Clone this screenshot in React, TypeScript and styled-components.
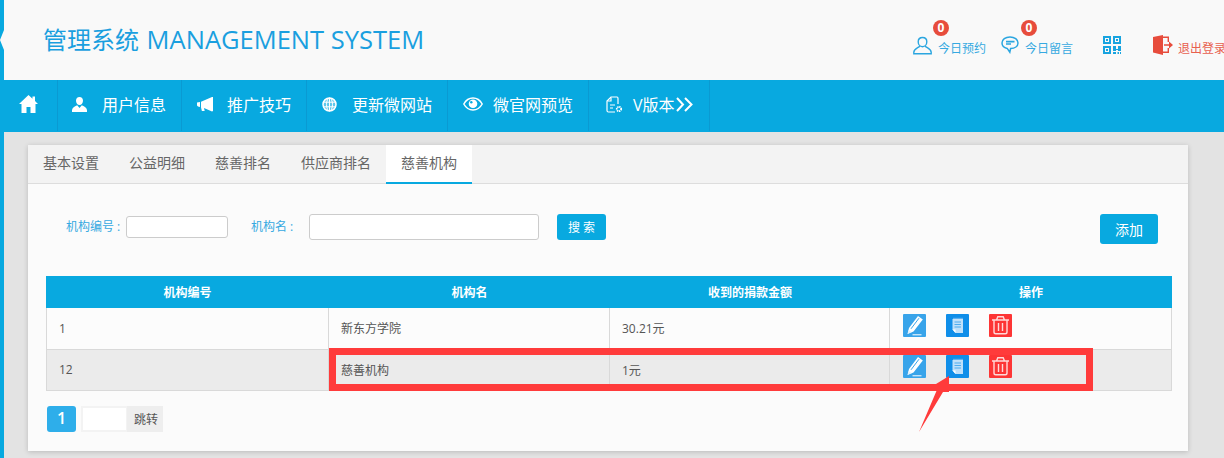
import React from "react";
import styled, { createGlobalStyle } from "styled-components";

const Global = createGlobalStyle`
  html, body { margin: 0; padding: 0; height: 458px; overflow: hidden; background: #e3e3e3; }
  body, input, button { font-family: "Open Sans", "Noto Sans CJK SC", sans-serif; }
  * { box-sizing: border-box; }
`;

const Shell = styled.div`
  position: relative; width: 1224px; height: 458px; overflow: hidden;
  display: flex; background: #e3e3e3;
`;
const Strip = styled.div`
  position: relative; width: 4px; flex: none; background: #08a9e0;
  &::after {
    content: ""; position: absolute; left: 0; top: 30px; width: 0; height: 0;
    border-right: 4px solid #f9f9f9; border-top: 10px solid transparent; border-bottom: 10px solid transparent;
  }
`;
const Main = styled.div`flex: 1; min-width: 0; display: flex; flex-direction: column;`;
const Header = styled.header`
  height: 80px; background: #f9f9f9; display: flex; position: relative; flex: none;
`;
const Title = styled.h1`
  margin: 23px 0 0 39px; height: 32px; font-size: 25.5px; line-height: 32px; font-weight: 400; color: #1a9fdf; white-space: nowrap;
  span { font-size: 24px; margin-right: 1px; }
`;
const Tools = styled.div`
  margin-left: auto; display: flex; align-items: flex-start; padding-top: 35px; width: 311px; flex: none; white-space: nowrap;
`;
const Tool = styled.div<{ $w: number; $gap?: number }>`
  position: relative; width: ${p => p.$w}px; flex: none; height: 20px; display: flex; align-items: center; gap: ${p => p.$gap ?? 6}px;
  font-size: 12px; color: ${p => p.color || "#36a9e1"};
  svg { flex: none; }
  span.label { margin-top: 6px; }
`;
const Badge = styled.span`
  position: absolute; left: 20px; top: -15px; width: 16px; height: 16px; border-radius: 50%;
  background: #e74c3c; color: #fff; font-size: 12px; font-weight: 700; line-height: 15px; text-align: center;
`;
const Nav = styled.nav`
  height: 52px; background: #08a9e0; display: flex; flex: none;
`;
const NavItem = styled.div<{ $w: number; $gap?: number; $pl?: number }>`
  width: ${p => p.$w}px; height: 51px; flex: none; display: flex; align-items: center; gap: ${p => p.$gap ?? 15}px; padding: 0 0 3px ${p => p.$pl ?? 15}px;
  border-right: 1px solid #0a9ad2; color: #fff; font-size: 16px; white-space: nowrap;
  svg { flex: none; }
`;
const VLabel = styled.span`
  display: inline-flex; align-items: center; svg { margin-left: 1px; }
`;
const Card = styled.section`
  margin: 13px 0 0 24px; width: 1160px; height: 306px; background: #fbfbfb; box-shadow: 0 1px 5px rgba(0,0,0,.18); flex: none;
`;
const Tabs = styled.div`
  height: 39px; background: #f3f3f3; border-bottom: 1px solid #ddd; display: flex;
`;
const Tab = styled.div<{ $active?: boolean }>`
  height: 39px; padding: 0 15px; font-size: 14px; line-height: 36px; color: #666; white-space: nowrap;
  background: ${p => (p.$active ? "#fff" : "transparent")};
  border-bottom: 2px solid ${p => (p.$active ? "#08a9e0" : "transparent")};
`;
const SearchBar = styled.div`
  height: 92px; padding: 30px 30px 0 38px; display: flex; align-items: flex-start; position: relative;
`;
const Label = styled.label<{ $w: number; $ml?: number }>`
  width: ${p => p.$w}px; margin-left: ${p => p.$ml || 0}px; height: 26px; line-height: 26px; font-size: 12px; color: #36a9e1; white-space: pre; flex: none;
`;
const Field = styled.input<{ $w: number; $h: number; $mt?: number }>`
  width: ${p => p.$w}px; height: ${p => p.$h}px; margin-top: ${p => p.$mt || 0}px; padding: 0;
  border: 1px solid #ccc; border-radius: 3px; background: #fff; flex: none; outline: none;
`;
const Btn = styled.button<{ $w: number; $h: number; $fs: number; $ml: number }>`
  width: ${p => p.$w}px; height: ${p => p.$h}px; margin-left: ${p => p.$ml}px; border: 0; border-radius: 3px; background: #08a9e0; color: #fff; padding: 0;
  font-size: ${p => p.$fs}px; flex: none;
`;
const Table = styled.table`
  width: 1126px; margin-left: 18px; border-collapse: separate; border-spacing: 0; table-layout: fixed; font-size: 12px;
`;
const Th = styled.th<{ $w: number }>`
  width: ${p => p.$w}px; height: 32px; padding: 0; background: #08a9e0; color: #fff; font-weight: 700; font-size: 12px; text-align: center;
`;
const Tr = styled.tr<{ $alt?: boolean }>`
  background: ${p => (p.$alt ? "#ebebeb" : "#fcfcfc")};
`;
const Td = styled.td<{ $pl?: number; $first?: boolean; $h: number }>`
  border-right: 1px solid #d9d9d9; border-bottom: 1px solid #d9d9d9;
  border-left: ${p => (p.$first ? "1px solid #d9d9d9" : "0")};
  height: ${p => p.$h}px; padding: 0 12px 1px ${p => p.$pl ?? 12}px; color: #555; white-space: nowrap;
`;
const Actions = styled.div`
  display: flex; gap: 20px; margin-top: -6px;
`;
const Pager = styled.div`
  display: flex; margin: 15px 0 0 19px; height: 26px;
`;
const PageNo = styled.div`
  width: 29px; height: 26px; border-radius: 3px; background: #2eaeea; color: #fff; text-align: center; line-height: 25px; font-size: 16px; font-weight: 600;
`;
const Jump = styled.div`
  margin-left: 5px; width: 82px; height: 26px; background: #eee; display: flex; align-items: center; font-size: 12px; color: #555;
`;
const JumpInput = styled.div`
  width: 46px; height: 26px; margin-right: 7px; background: #fff; border: 2px solid #f3f3f3; border-right-width: 1px;
`;
const Mark = styled.svg`
  position: absolute; left: 0; top: 0; pointer-events: none;
`;

const B = "#2ba6e0";
const User = () => (
  <svg width="19" height="19" viewBox="0 0 19 19" fill="none" stroke={B} strokeWidth="1.4">
    <path d="M9.500 1.500c2.500 0 4.300 1.700 4.300 4.200 0 2.600-1.800 5-4.300 5s-4.300-2.400-4.300-5c0-2.500 1.800-4.200 4.300-4.200z" />
    <path d="M6.800 9.800c-.3 1.900-5.800 2.300-6 6.500v1.500h17.400v-1.500c-.2-4.200-5.700-4.600-6-6.500" />
  </svg>
);
const Chat = () => (
  <svg width="18" height="18" viewBox="0 0 18 18" fill="none" stroke={B} strokeWidth="1.500">
    <path d="M9 1C4.400 1 1 3.500 1 7c0 2.900 2.200 4.800 5.200 5.400l2.600 3.800.8-3.700C13.800 12.400 17 10.300 17 7c0-3.500-3.500-6-8-6z" />
    <path d="M5 5.600h8.500M5 8h5" strokeWidth="1.700" />
  </svg>
);
const Qr = () => (
  <svg width="18" height="19" viewBox="0 0 18 19" fill="#18a4e0">
    <path fillRule="evenodd" d="M0 0h8v8H0zM2 2v4h4V2zM10 0h8v8h-8zM12 2v4h4V2zM0 10h8v8H0zM2 12v4h4v-4z" />
    <path d="M3 3h2v2H3zM13 3h2v2h-2zM3 13h2v2H3zM10 10h3v3h2v-3h3v5h-3v-1h-2v1h-3zM10 16h3v2h-3zM14.500 16h1.500v2h-1.500zM17 16h1v2h-1z" />
  </svg>
);
const Exit = () => (
  <svg width="20" height="20" viewBox="0 0 20 20" fill="#e74c3c">
    <path d="M0 2 10 0v20L0 17.500z" />
    <path d="M10 1.500h6V7h-1.400V3H10zM10 16.500h4.600V13H16v5h-6z" />
    <path d="M11 9.200h5V6.500l4 3.500-4 3.500v-2.700h-5z" />
  </svg>
);
const Home = () => (
  <svg width="19" height="18" viewBox="0 0 19 18" fill="#fff">
    <path d="M9.500 0 0 9h2.500v9h5v-6h4v6h5V9H19l-3-2.900V1.500h-2.500v2.200z" />
  </svg>
);
const NavUser = () => (
  <svg width="15" height="15" viewBox="0 0 15 15" fill="#fff">
    <path d="M7.500 0C9.700 0 11 1.600 11 3.700c0 2-1.400 4.300-3.500 4.300S4 5.700 4 3.700C4 1.600 5.300 0 7.500 0zM5.200 8.300 7.500 11l2.300-2.700c2 .8 4.800 2.300 5.200 4.700v2H0v-2c.4-2.400 3.200-3.900 5.200-4.700z" />
  </svg>
);
const Horn = () => (
  <svg width="16" height="15" viewBox="0 0 16 15" fill="#fff">
    <path d="M0 5.500 3 5v5L1 9.500 0 8.500zM4 4.800 15 0h1v14l-1 .5L7 11l.7 3H4.900L4 10.500z" />
  </svg>
);
const Globe = () => (
  <svg width="15" height="15" viewBox="0 0 15 15" fill="none" stroke="#fff">
    <circle cx="7.500" cy="7.500" r="6.500" fill="#fff" fillOpacity=".35" strokeWidth="1.500" />
    <ellipse cx="7.500" cy="7.500" rx="3" ry="6.500" />
    <path d="M7.500 1v13M1 5.200h13M1 9.800h13" />
  </svg>
);
const Eye = () => (
  <svg width="20" height="14" viewBox="0 0 20 14" fill="none">
    <path d="M.8 7C3 3 6.300 1 10 1s7 2 9.200 6c-2.200 4-5.500 6-9.200 6S3 11 .8 7z" stroke="#fff" strokeWidth="1.500" />
    <circle cx="10" cy="6.800" r="4.300" fill="#fff" />
    <circle cx="8.300" cy="5.200" r="1.200" fill="#08a9e0" />
  </svg>
);
const Doc = () => (
  <svg width="18" height="17" viewBox="0 0 18 17" fill="none" stroke="#fff" strokeWidth="1.200">
    <path d="M9 16H2.500Q1 16 1 14.500V5l4-4h6q1 0 1 1.500V8" />
    <path d="M1.500 5H5V1.500M4 9h5M4 12h3" />
    <circle cx="13" cy="13" r="2.200" strokeWidth="1.800" strokeDasharray="1.300 .6" />
  </svg>
);
const Chevrons = () => (
  <svg width="17" height="17" viewBox="0 0 17 17" fill="none" stroke="#fff" strokeWidth="2">
    <path d="M1 2l6 6.500L1 15M9 2l6.500 6.500L9 15" />
  </svg>
);
const Edit = () => (
  <svg width="23" height="23" viewBox="0 0 23 23">
    <rect width="23" height="23" rx="1" fill="#38a4ea" />
    <path d="M4.500 20 6 14 15 2l4.800 3.400L10.500 17.500z" fill="#fff" />
    <path d="M8 14.800 16 4.200" stroke="#38a4ea" strokeWidth="1" />
    <path d="M4.700 19.800 5.600 16l3 2.300z" fill="#dff0fc" />
    <path d="M9.500 20.800h9" stroke="#fff" strokeWidth="1" />
  </svg>
);
const Note = () => (
  <svg width="23" height="23" viewBox="0 0 23 23">
    <rect width="23" height="23" rx="1" fill="#0f8ee9" />
    <path d="M6.500 5h10.500v14H9.500l-3-3.500z" fill="#bfe0fa" />
    <path d="M6.500 15.500h3V19z" fill="#fff" />
    <path d="M8.500 8h6.500M8.500 10.500h6.500M8.500 13h6.500" stroke="#0f8ee9" strokeWidth=".9" opacity=".7" />
    <path d="M8 3.800v2M10 3.800v2M12 3.800v2M14 3.800v2M16 3.800v2" stroke="#cfe6fb" strokeWidth=".8" />
  </svg>
);
const Trash = () => (
  <svg width="23" height="23" viewBox="0 0 23 23" fill="none" stroke="#ffd9d9" strokeWidth="1.400">
    <rect width="23" height="23" rx="1" fill="#fd3535" stroke="none" />
    <path d="M3 6h17M7.500 6l1.300-3.200h5.400L15.500 6M5 6.500V18q0 1.800 1.800 1.800h9.400Q18 19.800 18 18V6.500M9.500 9v8M13.500 9v8" />
  </svg>
);
const ActionIcons = () => (
  <Actions><Edit /><Note /><Trash /></Actions>
);

export default function App() {
  return (
    <Shell>
      <Global />
      <Strip />
      <Main>
        <Header>
          <Title><span>管理系统</span> MANAGEMENT SYSTEM</Title>
          <Tools>
            <Tool $w={88}><User /><Badge>0</Badge><span className="label">今日预约</span></Tool>
            <Tool $w={102}><Chat /><Badge>0</Badge><span className="label">今日留言</span></Tool>
            <Tool $w={50}><Qr /></Tool>
            <Tool $w={71} $gap={5} color="#e8604f"><Exit /><span className="label">退出登录</span></Tool>
          </Tools>
        </Header>
        <Nav>
          <NavItem $w={54}><Home /></NavItem>
          <NavItem $w={124} $pl={14}><NavUser />用户信息</NavItem>
          <NavItem $w={125} $gap={14}><Horn />推广技巧</NavItem>
          <NavItem $w={141}><Globe />更新微网站</NavItem>
          <NavItem $w={141} $gap={10}><Eye />微官网预览</NavItem>
          <NavItem $w={121} $gap={9} $pl={17}><Doc /><VLabel>V版本<Chevrons /></VLabel></NavItem>
        </Nav>
        <Card>
          <Tabs>
            <Tab>基本设置</Tab>
            <Tab>公益明细</Tab>
            <Tab>慈善排名</Tab>
            <Tab>供应商排名</Tab>
            <Tab $active>慈善机构</Tab>
          </Tabs>
          <SearchBar>
            <Label $w={60}>机构编号 :</Label>
            <Field $w={102} $h={22} $mt={2} />
            <Label $w={58} $ml={23}>机构名 :</Label>
            <Field $w={230} $h={26} />
            <Btn $w={49} $h={26} $fs={12} $ml={18}>搜 索</Btn>
            <Btn $w={58} $h={30} $fs={14} $ml={494}>添加</Btn>
          </SearchBar>
          <Table>
            <thead>
              <tr>
                <Th $w={283}>机构编号</Th>
                <Th $w={281}>机构名</Th>
                <Th $w={280}>收到的捐款金额</Th>
                <Th $w={282}>操作</Th>
              </tr>
            </thead>
            <tbody>
              <Tr>
                <Td $h={42} $first>1</Td><Td $h={42}>新东方学院</Td><Td $h={42}>30.21元</Td>
                <Td $h={42} $pl={13}><ActionIcons /></Td>
              </Tr>
              <Tr $alt>
                <Td $h={41} $first>12</Td><Td $h={41}>慈善机构</Td><Td $h={41}>1元</Td>
                <Td $h={41} $pl={13}><ActionIcons /></Td>
              </Tr>
            </tbody>
          </Table>
          <Pager>
            <PageNo>1</PageNo>
            <Jump><JumpInput />跳转</Jump>
          </Pager>
        </Card>
      </Main>
      <Mark width="1224" height="458" viewBox="0 0 1224 458">
        <rect x="332.500" y="351.500" width="757" height="36" fill="none" stroke="#ff3b3b" strokeWidth="7" />
        <path d="M919 432 939 385 936 384 949 376 949 392 943 392z" fill="#ff3b3b" />
      </Mark>
    </Shell>
  );
}
